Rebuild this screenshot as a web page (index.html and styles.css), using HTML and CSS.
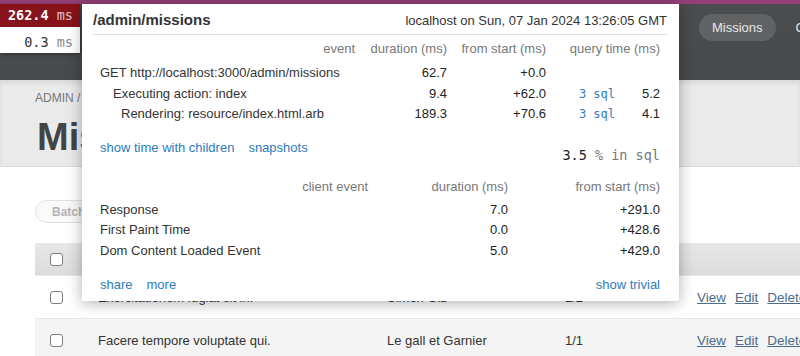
FILE: index.html
```html
<!DOCTYPE html>
<html lang="en">
<head>
    <meta charset="UTF-8">
    <meta name="viewport" content="width=device-width, initial-scale=1.0">
    <title>Missions - Admin</title>
    <link rel="stylesheet" href="styles.css">
</head>
<body>
    <div class="window-strip"></div>

    <header class="navbar">
        <div class="brand">Admin</div>
        <ul class="nav">
            <li class="active"><a href="#">Missions</a></li>
            <li><a href="#">Contrats</a></li>
        </ul>
    </header>

    <section class="page-header">
        <div class="breadcrumb">ADMIN / MISSIONS</div>
        <h1>Missions</h1>
    </section>

    <main class="page-body">
        <button class="batch">Batch Actions</button>
        <table class="index-table">
            <thead>
                <tr>
                    <th class="col-check"><span class="checkbox"></span></th>
                    <th class="col-title">Titre</th>
                    <th class="col-agency">Agence</th>
                    <th class="col-ratio">Ratio</th>
                    <th class="col-actions"></th>
                </tr>
            </thead>
            <tbody>
                <tr>
                    <td><span class="checkbox"></span></td>
                    <td>Exercitationem fugiat sit in.</td>
                    <td>Simon Giz</td>
                    <td>1/2</td>
                    <td><div class="actions"><a href="#">View</a><a href="#">Edit</a><a href="#">Delete</a></div></td>
                </tr>
                <tr class="even">
                    <td><span class="checkbox"></span></td>
                    <td>Facere tempore voluptate qui.</td>
                    <td>Le gall et Garnier</td>
                    <td>1/1</td>
                    <td><div class="actions"><a href="#">View</a><a href="#">Edit</a><a href="#">Delete</a></div></td>
                </tr>
            </tbody>
        </table>
    </main>

    <!-- mini profiler badge -->
    <div class="profiler-badge">
        <div class="badge-row slow">262.4 <span class="unit">ms</span></div>
        <div class="badge-row">0.3 <span class="unit">ms</span></div>
    </div>

    <!-- mini profiler popup -->
    <div class="profiler-popup">
        <div class="popup-title">
            <span class="path">/admin/missions</span>
            <span class="host">localhost on Sun, 07 Jan 2024 13:26:05 GMT</span>
        </div>

        <div class="timings">
            <div class="th">event</div>
            <div class="th">duration (ms)</div>
            <div class="th">from start (ms)</div>
            <div class="th span2">query time (ms)</div>

            <div class="name">GET http://localhost:3000/admin/missions</div>
            <div class="num">62.7</div>
            <div class="num">+0.0</div>
            <div class="num"></div>
            <div class="num"></div>

            <div class="name depth1">Executing action: index</div>
            <div class="num">9.4</div>
            <div class="num">+62.0</div>
            <div class="num"><a class="sql" href="#">3 sql</a></div>
            <div class="num">5.2</div>

            <div class="name depth2">Rendering: resource/index.html.arb</div>
            <div class="num">189.3</div>
            <div class="num">+70.6</div>
            <div class="num"><a class="sql" href="#">3 sql</a></div>
            <div class="num">4.1</div>
        </div>

        <div class="links-row">
            <div class="links">
                <a href="#">show time with children</a>
                <a href="#">snapshots</a>
            </div>
            <div class="sql-share">3.5 <span>% in sql</span></div>
        </div>

        <div class="client-timings">
            <div class="th">client event</div>
            <div class="th">duration (ms)</div>
            <div class="th">from start (ms)</div>

            <div class="name">Response</div>
            <div class="num">7.0</div>
            <div class="num">+291.0</div>

            <div class="name">First Paint Time</div>
            <div class="num">0.0</div>
            <div class="num">+428.6</div>

            <div class="name">Dom Content Loaded Event</div>
            <div class="num">5.0</div>
            <div class="num">+429.0</div>
        </div>

        <div class="popup-footer">
            <div class="links">
                <a href="#">share</a>
                <a href="#">more</a>
            </div>
            <a href="#">show trivial</a>
        </div>
    </div>
</body>
</html>
```

FILE: styles.css
```css
body, html {
    margin: 0;
    padding: 0;
    width: 800px;
    height: 356px;
    overflow: hidden;
    font-family: "Liberation Sans", Arial, sans-serif;
    font-size: 13px;
    color: #333;
    background-color: #fff;
}

body {
    position: relative;
}

a {
    text-decoration: none;
}

.window-strip {
    height: 4px;
    background-color: #953f77;
}

/* top navigation */
.navbar {
    display: grid;
    grid-template-columns: 699px 1fr;
    height: 76px;
    overflow: hidden;
    background: linear-gradient(#4b4c4e, #48494b);
}

.brand {
    color: #fff;
    font-size: 16px;
    padding: 14px 0 0 100px;
}

.nav {
    list-style-type: none;
    display: flex;
    gap: 8px;
    margin: 10px 0 0;
    padding: 0;
    white-space: nowrap;
}

.nav a {
    display: block;
    padding: 0 12px;
    line-height: 27px;
    border-radius: 14px;
    color: #e8e8e8;
}

.nav .active a {
    padding: 0 13px;
    background-color: #616264;
}

/* title area */
.page-header {
    padding: 11px 35px 7px;
    background-color: #eaeaea;
    border-bottom: 1px solid #dcdcdc;
    box-shadow: inset 0 3px 4px rgba(0, 0, 0, 0.08);
}

.breadcrumb {
    font-size: 12px;
    line-height: 14px;
    color: #777;
}

h1 {
    margin: 10px 0 0 2px;
    font-size: 38px;
    line-height: 44px;
    color: #444;
}

.page-body {
    padding: 33px 0 0 35px;
}

.batch {
    display: block;
    height: 23px;
    padding: 0 16px;
    border: 1px solid #e2e2e2;
    border-radius: 12px;
    background-color: #fafafa;
    color: #b3b3b3;
    font-family: inherit;
    font-size: 12px;
    font-weight: bold;
}

.index-table {
    margin-top: 20px;
    width: 820px;
    border-collapse: collapse;
    table-layout: fixed;
}

.index-table th {
    height: 32px;
    padding: 0 13px;
    text-align: left;
    font-weight: bold;
    color: #555;
    background: linear-gradient(#e7e7e7, #dcdcdc);
}

.index-table td {
    height: 42px;
    padding: 0 13px;
    border-top: 1px solid #e9e9e9;
}

.index-table tr.even td {
    background-color: #f4f4f4;
}

.index-table .col-check {
    width: 24px;
    padding-left: 15px;
    padding-right: 11px;
}

.index-table td:first-child {
    padding-left: 15px;
}

.col-title {
    width: 263px;
}

.col-agency {
    width: 152px;
}

.col-ratio {
    width: 106px;
}

.checkbox {
    display: block;
    width: 11px;
    height: 11px;
    border: 1.5px solid #7d7d7d;
    border-radius: 3px;
    background-color: #fff;
}

.actions {
    display: flex;
    gap: 9px;
    font-size: 13.5px;
}

.actions a {
    color: #4c6b8b;
    text-decoration: underline;
}

/* mini profiler */
.profiler-badge {
    position: absolute;
    top: 4px;
    left: 0;
    width: 80px;
    font-family: "DejaVu Sans Mono", monospace;
    font-size: 13.5px;
    text-align: right;
    background-color: #fff;
    box-shadow: 1px 1px 4px rgba(0, 0, 0, 0.35);
}

.badge-row {
    padding: 4px 7px 0 0;
    line-height: 22px;
    color: #333;
}

.badge-row .unit {
    color: #888;
}

.badge-row.slow {
    padding-top: 0;
    line-height: 23px;
    background-color: #88121a;
    color: #fff;
    font-weight: bold;
}

.badge-row.slow .unit {
    color: #e3c4c6;
    font-weight: normal;
}

.profiler-popup {
    position: absolute;
    top: 4px;
    left: 82px;
    width: 597px;
    box-sizing: border-box;
    padding: 0 12px 6px 11px;
    background-color: #fff;
    box-shadow: 0 2px 14px rgba(0, 0, 0, 0.32);
}

.profiler-popup a {
    color: #2e7bbd;
}

.popup-title {
    display: flex;
    justify-content: space-between;
    align-items: baseline;
    padding: 6px 0 3px;
    line-height: 20px;
    border-bottom: 1px solid #dedede;
}

.popup-title .path {
    font-size: 15px;
    font-weight: bold;
}

.timings {
    display: grid;
    grid-template-columns: 255px 92px 99px 69px 45px;
    margin: 4px 7px 0;
}

.client-timings {
    display: grid;
    grid-template-columns: 268px 140px 152px;
    margin: 12px 7px 0;
}

.th {
    text-align: right;
    line-height: 20px;
    padding-bottom: 4px;
    color: #777;
}

.client-timings .th {
    padding-bottom: 3px;
}

.th.span2 {
    grid-column: span 2;
}

.name,
.num {
    line-height: 20.5px;
    white-space: nowrap;
}

.num {
    text-align: right;
    color: #222;
}

.depth1 {
    padding-left: 13px;
}

.depth2 {
    padding-left: 21px;
}

.sql {
    font-family: "DejaVu Sans Mono", monospace;
    font-size: 12px;
}

.links-row {
    display: flex;
    justify-content: space-between;
    align-items: flex-start;
    margin: 13px 7px 0;
    line-height: 20px;
}

.links {
    display: flex;
    gap: 14px;
}

.sql-share {
    margin-top: 7px;
    font-family: "DejaVu Sans Mono", monospace;
    font-size: 13.5px;
    color: #222;
}

.sql-share span {
    color: #777;
}

.popup-footer {
    display: flex;
    justify-content: space-between;
    margin: 14px 7px 0;
    line-height: 20px;
}
```
